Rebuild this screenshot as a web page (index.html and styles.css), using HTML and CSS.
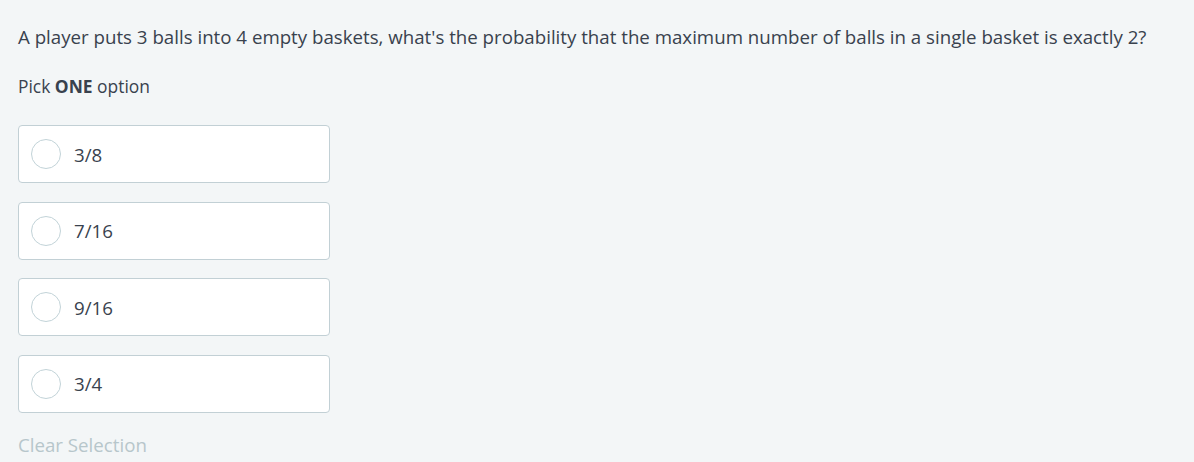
FILE: index.html
```html
<!DOCTYPE html>
<html>
<head>
<meta charset="utf-8">
<link rel="stylesheet" href="styles.css">
</head>
<body>
<div class="question">
  <p class="stem">A player puts 3 balls into 4 empty baskets, what's the probability that the maximum number of balls in a single basket is exactly 2?</p>
  <p class="hint">Pick <b>ONE</b> option</p>
  <div class="options">
    <label class="option"><span class="radio"></span><span class="opt-text">3/8</span></label>
    <label class="option"><span class="radio"></span><span class="opt-text">7/16</span></label>
    <label class="option"><span class="radio"></span><span class="opt-text">9/16</span></label>
    <label class="option"><span class="radio"></span><span class="opt-text">3/4</span></label>
  </div>
  <div class="clear">Clear Selection</div>
</div>
</body>
</html>
```
FILE: styles.css
```css
html, body {
  margin: 0;
  padding: 0;
  background: #f3f6f7;
}
body {
  font-family: "Open Sans", "Liberation Sans", sans-serif;
  color: #39424e;
}
.question {
  padding: 24px 18px 0 18px;
}
.stem {
  margin: 0;
  font-size: 18.7px;
  line-height: 26px;
}
.hint {
  margin: 24px 0 0 0;
  font-size: 17.4px;
  line-height: 24px;
}
.hint b {
  font-weight: 700;
}
.options {
  margin-top: 27px;
  display: flex;
  flex-direction: column;
  gap: 18.67px;
  width: 312px;
}
.option {
  display: flex;
  align-items: center;
  height: 58px;
  box-sizing: border-box;
  background: #fff;
  border: 1px solid #c2d0d5;
  border-radius: 4px;
  padding-left: 12px;
}
.radio {
  width: 30px;
  height: 30px;
  box-sizing: border-box;
  border: 1px solid #c2d3d8;
  border-radius: 50%;
  background: #fff;
  flex: none;
}
.opt-text {
  margin-left: 13px;
  font-size: 18.7px;
}
.clear {
  margin-top: 19px;
  font-size: 18.7px;
  color: #b7c6cb;
}
```
